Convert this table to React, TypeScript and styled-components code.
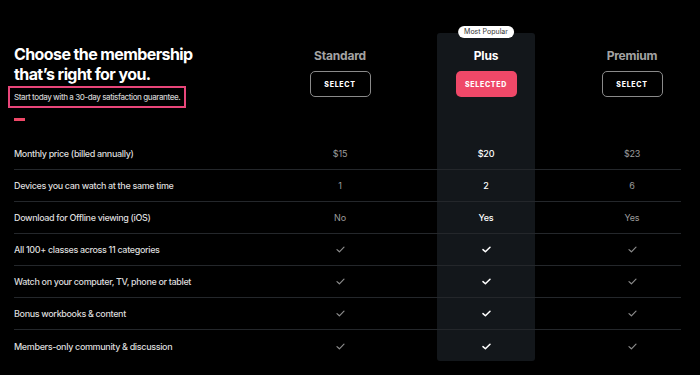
import styled, { createGlobalStyle } from 'styled-components'

const GlobalStyle = createGlobalStyle`
  html, body {
    margin: 0;
    padding: 0;
    background: #000;
  }
  body {
    font-family: Inter, "Noto Sans", sans-serif;
    color: #fff;
  }
`

const PINK = '#ef4868'
const COLS = '229px 98px 98px 98px'

const Page = styled.div`
  width: 700px;
  height: 375px;
  overflow: hidden;
  padding: 33px 0 0 14px;
  box-sizing: border-box;
`

const Table = styled.div`
  display: grid;
  grid-template-columns: ${COLS};
  column-gap: 48px;
  grid-template-rows: 105px repeat(7, 32px);
  width: 667px;
`

const Highlight = styled.div`
  grid-column: 3;
  grid-row: 1 / -1;
  position: relative;
  background: #13171b;
  border-radius: 3px;
  margin-bottom: 1px;
`

const Badge = styled.span`
  position: absolute;
  top: -7px;
  left: 50%;
  transform: translateX(-50%);
  background: #fff;
  color: #333;
  font-size: 7px;
  line-height: 12px;
  padding: 0 6px;
  border-radius: 7px;
  white-space: nowrap;
`

const Intro = styled.div`
  grid-column: 1;
  grid-row: 1;
  padding-top: 11px;
`

const Title = styled.h1`
  margin: 0;
  font-size: 16px;
  line-height: 20px;
  font-weight: 700;
  letter-spacing: -0.6px;
`

const Subtitle = styled.span`
  display: inline-block;
  margin: 0 0 0 -6px;
  padding: 2px 4px;
  border: 2px solid #e8467a;
  font-size: 8px;
  font-weight: 500;
  line-height: 14px;
  letter-spacing: -0.42px;
  color: #cfcfcf;
`

const Dash = styled.div`
  width: 11px;
  height: 3px;
  margin-top: 10px;
  background: ${PINK};
`

const PlanHead = styled.div<{ $col: number }>`
  grid-column: ${({ $col }) => $col};
  grid-row: 1;
  display: flex;
  flex-direction: column;
  align-items: center;
  padding-top: 15px;
  position: relative;
  z-index: 1;
`

const PlanName = styled.div<{ $active?: boolean }>`
  font-size: 12px;
  line-height: 16px;
  font-weight: 700;
  letter-spacing: -0.2px;
  color: ${({ $active }) => ($active ? '#fff' : '#a3a3a3')};
`

const Button = styled.button<{ $active?: boolean }>`
  margin-top: 7px;
  width: 61px;
  height: 26px;
  border-radius: 5px;
  border: ${({ $active }) => ($active ? 'none' : '1.5px solid #8a8a8a')};
  background: ${({ $active }) => ($active ? PINK : 'transparent')};
  color: #fff;
  font-family: Inter, sans-serif;
  font-size: 7px;
  font-weight: 800;
  letter-spacing: 0.7px;
  padding: 0;
`

const Row = styled.div<{ $row: number; $last?: boolean }>`
  grid-column: 1 / -1;
  grid-row: ${({ $row }) => $row};
  display: grid;
  grid-template-columns: ${COLS};
  column-gap: 48px;
  align-items: center;
  border-bottom: ${({ $last }) => ($last ? 'none' : '1px solid #24272b')};
  position: relative;
  z-index: 1;
`

const Label = styled.div`
  font-size: 9px;
  font-weight: 500;
  letter-spacing: -0.35px;
  color: #dcdcdc;
`

const Value = styled.div<{ $active?: boolean }>`
  text-align: center;
  font-size: 9px;
  font-weight: ${({ $active }) => ($active ? 500 : 400)};
  letter-spacing: -0.2px;
  color: ${({ $active }) => ($active ? '#fff' : '#9c9c9c')};
  display: flex;
  justify-content: center;
`

const Check = ({ active }: { active?: boolean }) => (
  <svg width="9" height="7" viewBox="0 0 9 7">
    <polyline
      points="1,3.6 3.4,5.8 8,1.2"
      fill="none"
      stroke={active ? '#fff' : '#8c8c8c'}
      strokeWidth={active ? 1.5 : 1.2}
      strokeLinecap="round"
      strokeLinejoin="round"
    />
  </svg>
)

type Cell = string | true

const features: { label: string; values: [Cell, Cell, Cell] }[] = [
  { label: 'Monthly price (billed annually)', values: ['$15', '$20', '$23'] },
  { label: 'Devices you can watch at the same time', values: ['1', '2', '6'] },
  { label: 'Download for Offline viewing (iOS)', values: ['No', 'Yes', 'Yes'] },
  { label: 'All 100+ classes across 11 categories', values: [true, true, true] },
  { label: 'Watch on your computer, TV, phone or tablet', values: [true, true, true] },
  { label: 'Bonus workbooks & content', values: [true, true, true] },
  { label: 'Members-only community & discussion', values: [true, true, true] },
]

const plans = [
  { name: 'Standard', active: false },
  { name: 'Plus', active: true },
  { name: 'Premium', active: false },
]

export default function App() {
  return (
    <Page>
      <GlobalStyle />
      <Table>
        <Highlight>
          <Badge>Most Popular</Badge>
        </Highlight>
        <Intro>
          <Title>
            Choose the membership
            <br />
            that’s right for you.
          </Title>
          <Subtitle>Start today with a 30-day satisfaction guarantee.</Subtitle>
          <Dash />
        </Intro>
        {plans.map((plan, i) => (
          <PlanHead key={plan.name} $col={i + 2}>
            <PlanName $active={plan.active}>{plan.name}</PlanName>
            <Button $active={plan.active}>{plan.active ? 'SELECTED' : 'SELECT'}</Button>
          </PlanHead>
        ))}
        {features.map((f, r) => (
          <Row key={f.label} $row={r + 2} $last={r === features.length - 1}>
            <Label>{f.label}</Label>
            {f.values.map((v, c) => (
              <Value key={c} $active={c === 1}>
                {v === true ? <Check active={c === 1} /> : v}
              </Value>
            ))}
          </Row>
        ))}
      </Table>
    </Page>
  )
}
